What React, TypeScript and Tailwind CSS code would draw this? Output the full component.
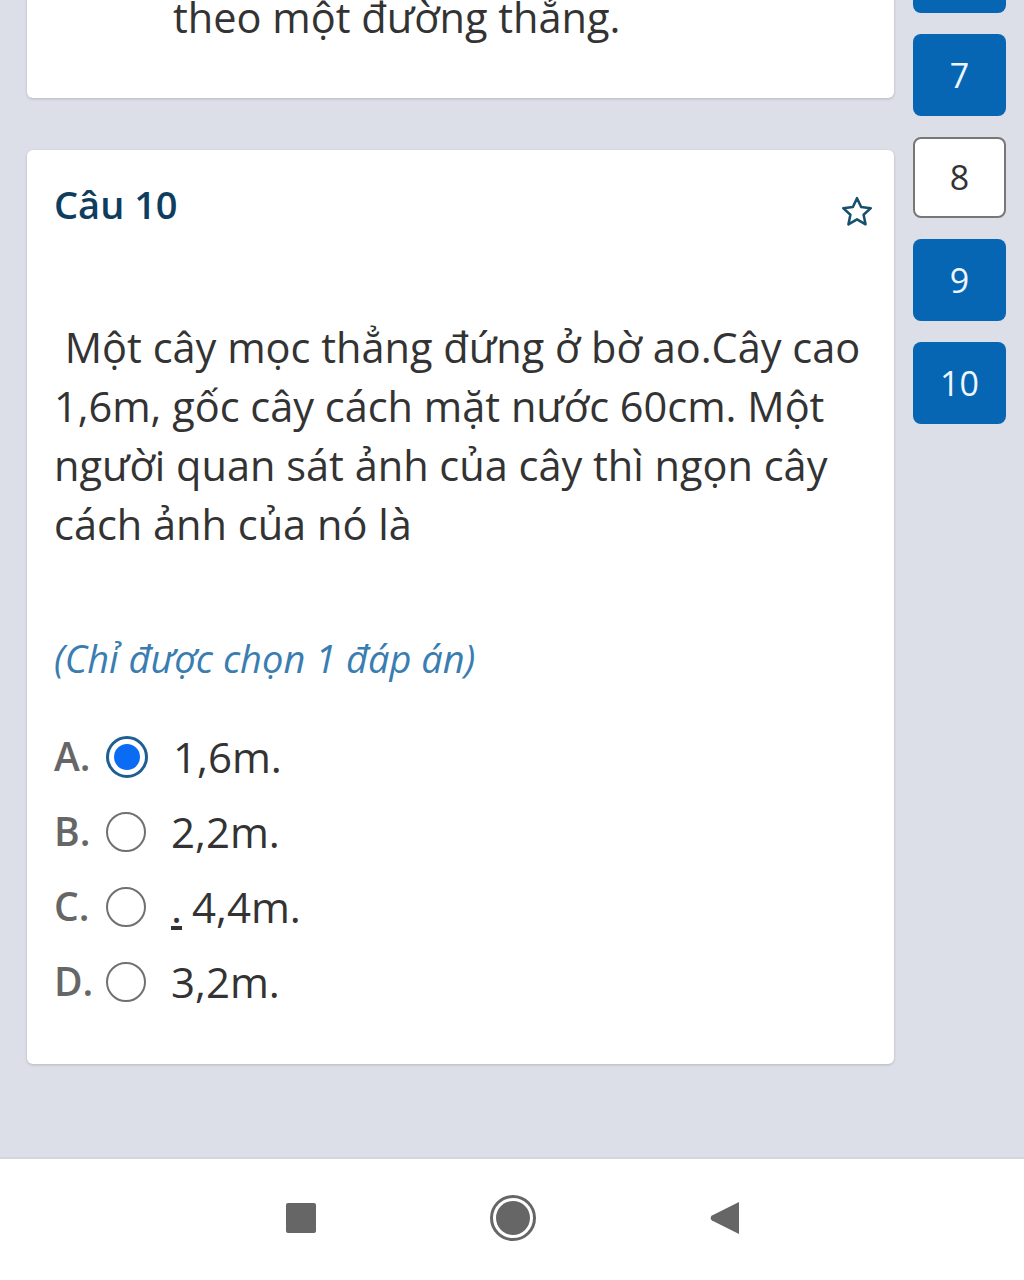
import React from "react";

const font = { fontFamily: '"Open Sans", "Noto Sans", sans-serif' };

const options = [
  { key: "A.", text: "1,6m.", checked: true },
  { key: "B.", text: "2,2m.", checked: false },
  { key: "C.", text: "4,4m.", checked: false, dot: true },
  { key: "D.", text: "3,2m.", checked: false },
];

const Radio = ({ checked }: { checked: boolean }) =>
  checked ? (
    <span className="flex h-[42px] w-[42px] items-center justify-center rounded-full border-[3px] border-[#1d5e93] bg-white">
      <span className="h-[26px] w-[26px] rounded-full bg-[#0a6cf2]" />
    </span>
  ) : (
    <span className="h-[40px] w-[40px] rounded-full border-2 border-[#707070] bg-white" />
  );

const NavButton = ({ n, active }: { n?: string; active?: boolean }) => (
  <div
    className={
      active
        ? "flex h-[82px] w-[93px] items-center justify-center rounded-lg bg-[#0766b4] text-[34px] text-[#eef6ff]"
        : "flex h-[81px] w-[93px] items-center justify-center rounded-lg border-2 border-[#777] bg-white text-[34px] text-[#333]"
    }
  >
    {n}
  </div>
);

export default function App() {
  return (
    <div className="flex h-[1280px] w-[1024px] flex-col bg-[#dcdfe7]" style={font}>
      <div className="flex h-[1157px] gap-[19px] overflow-hidden pl-[27px]">
        {/* questions */}
        <div className="flex w-[867px] flex-col gap-[52px]">
          <div className="mt-[-70px] rounded-md bg-white pb-[51px] pl-[146px] pt-[58px] text-[41.5px] leading-[59px] text-[#333] shadow-[0_1px_3px_rgba(0,0,0,0.18)]">
            theo một đường thẳng.
          </div>

          <div className="flex h-[914px] flex-col rounded-md bg-white px-[27px] pt-[22px] shadow-[0_1px_3px_rgba(0,0,0,0.18)]">
            <div className="flex items-start justify-between">
              <h2 className="mt-[2px] text-[38px] font-semibold leading-[60px] text-[#0e3d5e]">
                Câu 10
              </h2>
              <svg
                className="mr-[-8px] mt-[22px]"
                width="36"
                height="36"
                viewBox="0 0 24 24"
                fill="none"
                stroke="#16506f"
                strokeWidth="1.7"
                strokeLinejoin="round"
              >
                <path d="M12 2.8l2.75 5.9 6.45.75-4.8 4.4 1.3 6.35L12 16.9l-5.7 3.3 1.3-6.35-4.8-4.4 6.45-.75z" />
              </svg>
            </div>

            <p className="mt-[84px] text-[41.5px] leading-[59px] text-[#333]">
              &nbsp;Một cây mọc thẳng đứng ở bờ ao.Cây cao
              <br />
              1,6m, gốc cây cách mặt nước 60cm. Một
              <br />
              người quan sát ảnh của cây thì ngọn cây
              <br />
              cách ảnh của nó là
            </p>

            <p className="mt-[79px] text-[38px] italic leading-[50px] text-[#3a7db0]">
              (Chỉ được chọn 1 đáp án)
            </p>

            <div className="mt-[36px] flex flex-col">
              {options.map((o) => (
                <div key={o.key} className="flex h-[75px] items-center">
                  <span className="w-[52px] text-[39px] font-semibold text-[#666]">{o.key}</span>
                  <Radio checked={o.checked} />
                  <span className="ml-[25px] text-[42px] text-[#333]">
                    {o.dot && <span className="mr-[10px] underline">.</span>}
                    {o.text}
                  </span>
                </div>
              ))}
            </div>
          </div>
        </div>

        {/* question numbers */}
        <div className="mt-[-69px] flex w-[93px] flex-col gap-[21px]">
          <NavButton active />
          <NavButton n="7" active />
          <NavButton n="8" />
          <NavButton n="9" active />
          <NavButton n="10" active />
        </div>
      </div>

      {/* android nav bar */}
      <div className="flex h-[123px] items-center justify-center gap-[174px] border-t-2 border-[#d4d6dc] bg-white pb-[4px] pr-[2px]">
        <span className="ml-[4px] h-[30px] w-[30px] rounded-[2px] bg-[#666]" />
        <span className="flex h-[46px] w-[46px] items-center justify-center rounded-full border-[3px] border-[#666] bg-white">
          <span className="h-[34px] w-[34px] rounded-full bg-[#666]" />
        </span>
        <svg width="30" height="34" viewBox="0 0 30 34">
          <path d="M29 1v32L2 19.5a3 3 0 010-5z" fill="#666" />
        </svg>
      </div>
    </div>
  );
}
